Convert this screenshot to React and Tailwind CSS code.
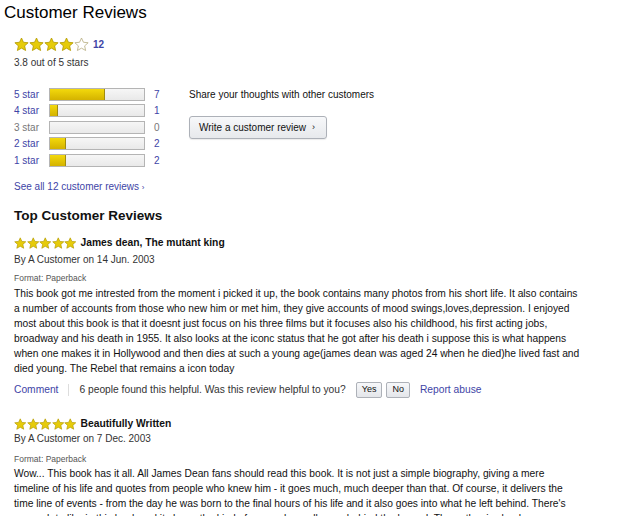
import React from "react";

const LINK = "text-[#3e44a6]";

function Star({ size = 15, filled = true }) {
  return (
    <svg width={size} height={size} viewBox="0 0 24 24" className="block">
      <polygon
        points="12,1.6 15.1,8.4 22.6,9.2 17,14.2 18.6,21.6 12,17.8 5.4,21.6 7,14.2 1.4,9.2 8.9,8.4"
        fill={filled ? "#e6cb0a" : "#ffffff"}
        stroke={filled ? "#b39a00" : "#b8ae80"}
        strokeWidth="1.3"
        strokeLinejoin="round"
      />
    </svg>
  );
}

function Stars({ count, size }) {
  return (
    <div className="flex">
      {[0, 1, 2, 3, 4].map((i) => (
        <Star key={i} size={size} filled={i < count} />
      ))}
    </div>
  );
}

const hist = [
  { label: "5 star", n: 7 },
  { label: "4 star", n: 1 },
  { label: "3 star", n: 0 },
  { label: "2 star", n: 2 },
  { label: "1 star", n: 2 },
];

function Review({ title, date, lines, helpful, gaps }) {
  return (
    <div>
      <div className={`flex items-center h-[14px] ${gaps[0]}`}>
        <Stars count={5} size={12.5} />
        <span className="ml-[4px] font-bold text-[10.3px] text-[#111]">{title}</span>
      </div>
      <div className={`h-[14px] leading-[14px] text-[10px] text-[#333] ${gaps[1]}`}>
        By A Customer on {date}
      </div>
      <div className={`h-[12px] leading-[12px] text-[8.5px] text-[#555] ${gaps[2]}`}>
        Format: Paperback
      </div>
      <p className={`text-[10.25px] leading-[15px] text-[#111] whitespace-nowrap ${gaps[3]}`}>
        {lines.map((l, i) => (
          <React.Fragment key={i}>
            {l}
            {i < lines.length - 1 && <br />}
          </React.Fragment>
        ))}
      </p>
      {helpful && (
        <div className="flex items-center h-[18px] mt-[5.5px] text-[10.25px]">
          <span className={LINK}>Comment</span>
          <span className="mx-[10px] w-px h-[12px] bg-[#ddd]" />
          <span className="text-[#333]">
            6 people found this helpful. Was this review helpful to you?
          </span>
          <span className="ml-[10px] h-[16px] px-[5px] flex items-center border border-[#adb1b8] rounded-[2px] bg-gradient-to-b from-[#f7f8fa] to-[#e4e6ea] text-[9px] text-[#111]">
            Yes
          </span>
          <span className="ml-[4px] h-[16px] px-[5px] flex items-center border border-[#adb1b8] rounded-[2px] bg-gradient-to-b from-[#f7f8fa] to-[#e4e6ea] text-[9px] text-[#111]">
            No
          </span>
          <span className={`ml-[10px] ${LINK}`}>Report abuse</span>
        </div>
      )}
    </div>
  );
}

export default function App() {
  return (
    <div className="w-[640px] h-[516px] overflow-hidden bg-white font-['Liberation_Sans',Arial,sans-serif] text-[#111]">
      <h2 className="pt-[2px] pl-[4px] text-[17px] leading-[21px] font-normal text-black">
        Customer Reviews
      </h2>
      <div className="pl-[14px]">
        <div className="mt-[14px] flex items-center h-[14px]">
          <Stars count={4} size={15} />
          <span className={`ml-[4px] text-[10px] font-bold ${LINK}`}>12</span>
        </div>
        <div className="mt-[5px] h-[14px] leading-[14px] text-[10px] text-[#333]">
          3.8 out of 5 stars
        </div>

        <div className="mt-[15.75px] flex">
          <div className="w-[160px]">
            {hist.map((h) => (
              <div key={h.label} className="flex items-center h-[16.5px] text-[10px]">
                <span className={`w-[35px] ${h.n === 0 ? "text-[#777]" : LINK}`}>{h.label}</span>
                <div className="w-[96px] h-[13px] border border-[#b4b4b4] bg-gradient-to-b from-[#f6f6f6] to-[#e9e9e9] overflow-hidden">
                  {h.n > 0 && (
                    <div
                      className="h-full bg-gradient-to-b from-[#f3d90c] to-[#d4b200] border-r border-[#a08c10]"
                      style={{ width: `${(h.n / 12) * 100}%` }}
                    />
                  )}
                </div>
                <span className={`ml-[9px] ${h.n === 0 ? "text-[#777]" : LINK}`}>{h.n}</span>
              </div>
            ))}
          </div>
          <div className="ml-[15px]">
            <div className="h-[16.5px] flex items-center text-[10px] text-[#111]">
              Share your thoughts with other customers
            </div>
            <div className="mt-[13.75px] w-[138px] h-[23px] flex items-center pl-[9px] border border-[#adb1b8] rounded-[3px] bg-gradient-to-b from-[#f7f8fa] to-[#e7e9ec] shadow-[0_1px_1px_rgba(0,0,0,0.08)] text-[10px] text-[#111]">
              Write a customer review
              <span className="ml-[6px] text-[9px]">›</span>
            </div>
          </div>
        </div>

        <div className={`mt-[11.75px] h-[14px] leading-[14px] text-[10px] ${LINK}`}>
          See all 12 customer reviews <span className="text-[8px]">›</span>
        </div>

        <h3 className="mt-[14px] h-[16px] leading-[16px] text-[13.5px] font-bold text-[#111]">
          Top Customer Reviews
        </h3>

        <Review
          title="James dean, The mutant king"
          date="14 Jun. 2003"
          helpful
          gaps={["mt-[12px]", "mt-[3px]", "mt-[5px]", "mt-[1.5px]"]}
          lines={[
            "This book got me intrested from the moment i picked it up, the book contains many photos from his short life. It also contains",
            "a number of accounts from those who new him or met him, they give accounts of mood swings,loves,depression. I enjoyed",
            "most about this book is that it doesnt just focus on his three films but it focuses also his childhood, his first acting jobs,",
            "broadway and his death in 1955. It also looks at the iconc status that he got after his death i suppose this is what happens",
            "when one makes it in Hollywood and then dies at such a young age(james dean was aged 24 when he died)he lived fast and",
            "died young. The Rebel that remains a icon today",
          ]}
        />

        <Review
          title="Beautifully Written"
          date="7 Dec. 2003"
          gaps={["mt-[18px]", "mt-[1px]", "mt-[7px]", "mt-[0.5px]"]}
          lines={[
            "Wow... This book has it all. All James Dean fans should read this book. It is not just a simple biography, giving a mere",
            "timeline of his life and quotes from people who knew him - it goes much, much deeper than that. Of course, it delivers the",
            "time line of events - from the day he was born to the final hours of his life and it also goes into what he left behind. There's",
            "so much to like in this book and it shows the kind of person he really was behind the legend. The author is clearly",
          ]}
        />
      </div>
    </div>
  );
}
